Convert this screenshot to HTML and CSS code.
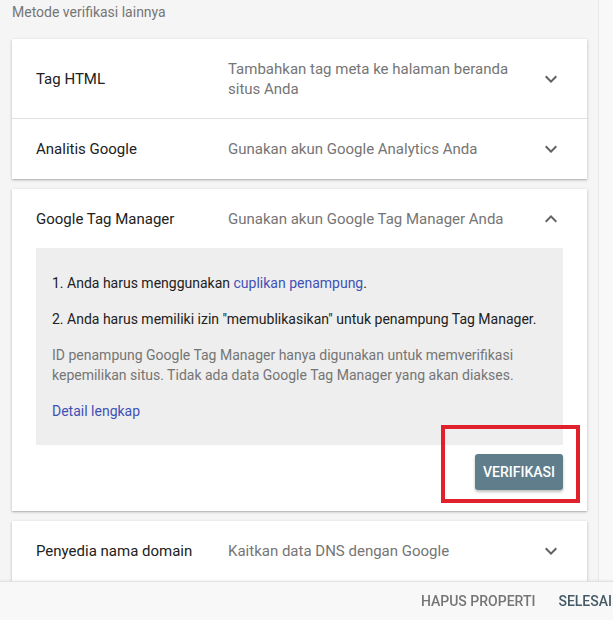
FILE: index.html
```html
<!DOCTYPE html>
<html lang="id">
<head>
    <meta charset="UTF-8">
    <meta name="viewport" content="width=device-width, initial-scale=1.0">
    <title>Metode verifikasi lainnya</title>
    <link rel="stylesheet" href="styles.css">
</head>
<body>
    <div class="page">
        <div class="content">
            <div class="section-title">Metode verifikasi lainnya</div>

            <!-- Tag HTML + Analitis -->
            <div class="card">
                <div class="method-row">
                    <div class="method-name">Tag HTML</div>
                    <div class="method-desc">Tambahkan tag meta ke halaman beranda situs Anda</div>
                    <svg class="chevron" viewBox="0 0 24 24"><path d="M16.59 8.59L12 13.17 7.41 8.59 6 10l6 6 6-6z"/></svg>
                </div>
                <div class="method-row">
                    <div class="method-name">Analitis Google</div>
                    <div class="method-desc">Gunakan akun Google Analytics Anda</div>
                    <svg class="chevron" viewBox="0 0 24 24"><path d="M16.59 8.59L12 13.17 7.41 8.59 6 10l6 6 6-6z"/></svg>
                </div>
            </div>

            <!-- Google Tag Manager (expanded) -->
            <div class="card card-open">
                <div class="method-row">
                    <div class="method-name">Google Tag Manager</div>
                    <div class="method-desc">Gunakan akun Google Tag Manager Anda</div>
                    <svg class="chevron" viewBox="0 0 24 24"><path d="M12 8l-6 6 1.41 1.41L12 10.83l4.59 4.58L18 14z"/></svg>
                </div>
                <div class="method-panel">
                    <p>1. Anda harus menggunakan <a href="#">cuplikan penampung</a>.</p>
                    <p>2. Anda harus memiliki izin "memublikasikan" untuk penampung Tag Manager.</p>
                    <p class="muted">ID penampung Google Tag Manager hanya digunakan untuk memverifikasi kepemilikan situs. Tidak ada data Google Tag Manager yang akan diakses.</p>
                    <p><a href="#">Detail lengkap</a></p>
                </div>
                <div class="panel-actions">
                    <button class="verify-button">Verifikasi</button>
                </div>
                <div class="highlight-box"></div>
            </div>

            <!-- Penyedia nama domain -->
            <div class="card card-last">
                <div class="method-row">
                    <div class="method-name">Penyedia nama domain</div>
                    <div class="method-desc">Kaitkan data DNS dengan Google</div>
                    <svg class="chevron" viewBox="0 0 24 24"><path d="M16.59 8.59L12 13.17 7.41 8.59 6 10l6 6 6-6z"/></svg>
                </div>
            </div>
        </div>
        <div class="scroll-strip"></div>
    </div>

    <div class="footer">
        <button class="footer-button">Hapus properti</button>
        <button class="footer-button primary">Selesai</button>
    </div>
</body>
</html>
```

FILE: styles.css
```css
body {
    font-family: Roboto, "Liberation Sans", Arial, sans-serif;
    margin: 0;
    padding: 0;
    background-color: #f5f5f5;
    height: 620px;
    overflow: hidden;
}

.page {
    display: flex;
    height: 620px;
}

.content {
    width: 575px;
    padding: 0 11px 0 12px;
}

.scroll-strip {
    flex: 1;
    background: #f8f8f8;
    border-left: 1px solid #e9e9e9;
}

.section-title {
    font-size: 14px;
    line-height: 20px;
    color: #757575;
    padding-top: 2px;
    margin-bottom: 17px;
}

.card {
    position: relative;
    background: #fff;
    box-shadow: 0 1px 3px rgba(0, 0, 0, 0.22), 0 1px 1px rgba(0, 0, 0, 0.1);
    margin-bottom: 10px;
}

.method-row {
    display: grid;
    grid-template-columns: 192px 1fr 24px;
    align-items: center;
    padding: 20px 24px;
    font-size: 15px;
    line-height: 20px;
}

.method-row + .method-row {
    border-top: 1px solid #e0e0e0;
}

.method-row:first-child {
    padding-bottom: 19px;
}

.method-name {
    color: #212121;
}

.method-desc {
    color: #757575;
    padding-right: 12px;
}

.chevron {
    width: 24px;
    height: 24px;
    margin: -2px 0;
    fill: #616161;
}

.method-panel {
    margin: 0 24px;
    background: #eeeeee;
    padding: 25px 16px 24px;
    font-size: 14px;
    line-height: 20px;
    color: #212121;
}

.method-panel p {
    margin: 0 0 16px 0;
}

.method-panel p:last-child {
    margin-bottom: 0;
}

.method-panel .muted {
    color: #757575;
}

.method-panel a {
    color: #3f51b5;
    text-decoration: none;
}

.panel-actions {
    display: flex;
    justify-content: flex-end;
    padding: 9px 24px 21px;
}

.verify-button {
    font-family: Roboto, "Liberation Sans", Arial, sans-serif;
    background: #607d8b;
    color: #fff;
    border: none;
    border-radius: 3px;
    height: 36px;
    padding: 0 8px;
    min-width: 88px;
    font-size: 14px;
    font-weight: 500;
    text-transform: uppercase;
    box-shadow: 0 2px 3px rgba(0, 0, 0, 0.25);
    cursor: pointer;
}

/* annotation drawn on top of the screenshot */
.highlight-box {
    position: absolute;
    left: 429px;
    top: 236px;
    width: 131px;
    height: 70px;
    border: 4px solid #e0202b;
}

.card-last {
    height: 120px;
}

.footer {
    position: fixed;
    left: 0;
    bottom: 0;
    width: 620px;
    height: 38px;
    display: flex;
    justify-content: flex-end;
    align-items: center;
    gap: 7px;
    background: #f8f8f8;
    border-top: 1px solid #e2e2e2;
    box-shadow: 0 -1px 2px rgba(0, 0, 0, 0.05);
}

.footer-button {
    font-family: Roboto, "Liberation Sans", Arial, sans-serif;
    background: none;
    border: none;
    padding: 0 8px;
    height: 36px;
    font-size: 14px;
    font-weight: 500;
    text-transform: uppercase;
    color: #757575;
    cursor: pointer;
}

.footer-button.primary {
    color: #455a64;
}
```
